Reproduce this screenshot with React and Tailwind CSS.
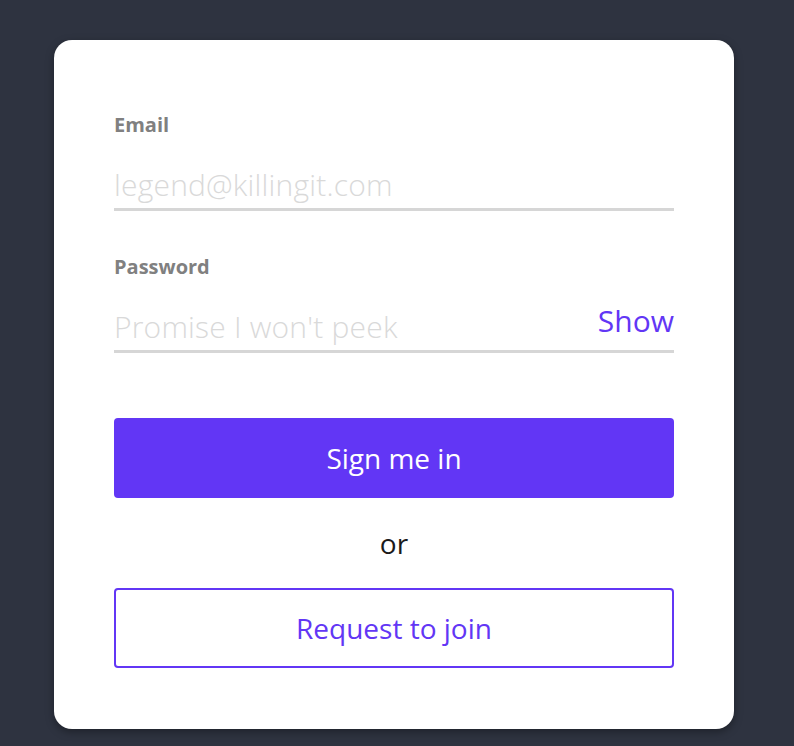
import React, { useState } from 'react';

const labelStyle = "block text-[20px] leading-[22px] font-bold text-[#808080]";
const inputStyle = "w-full h-[46px] pb-[4px] border-b-[3px] border-[#d6d6d6] bg-transparent outline-none text-[30px] font-light tracking-[0.2px] text-[#333] placeholder:text-[#d9d9d9]";

export default function App() {
  const [show, setShow] = useState(false);

  return (
    <div className="min-h-[746px] bg-[#2e3340] pt-[40px] pl-[54px]" style={{ fontFamily: '"Open Sans", Lato, sans-serif' }}>
      <div className="w-[680px] bg-white rounded-[18px] shadow-[0_3px_8px_rgba(0,0,0,0.35)] px-[60px] pt-[74px] pb-[61px]">
        {/* Email */}
        <label className={labelStyle}>Email</label>
        <input
          type="email"
          placeholder="legend@killingit.com"
          className={`${inputStyle} mt-[29px]`}
        />

        {/* Password */}
        <label className={`${labelStyle} mt-[45px]`}>Password</label>
        <div className="relative mt-[29px]">
          <input
            type={show ? 'text' : 'password'}
            placeholder="Promise I won't peek"
            className={`${inputStyle} pr-[90px]`}
          />
          <button
            onClick={() => setShow(!show)}
            className="absolute right-0 top-[-2px] text-[30px] leading-[32px] text-[#6236f5]"
          >
            Show
          </button>
        </div>

        <button className="mt-[65px] w-full h-[80px] rounded-[4px] bg-[#6236f5] text-white text-[28px]">
          Sign me in
        </button>

        <p className="text-center text-[28px] leading-[32px] text-[#1a1a1a] my-[29px]">or</p>

        <button className="w-full h-[80px] rounded-[4px] border-2 border-[#6236f5] bg-white text-[#6236f5] text-[28px]">
          Request to join
        </button>
      </div>
    </div>
  );
}
